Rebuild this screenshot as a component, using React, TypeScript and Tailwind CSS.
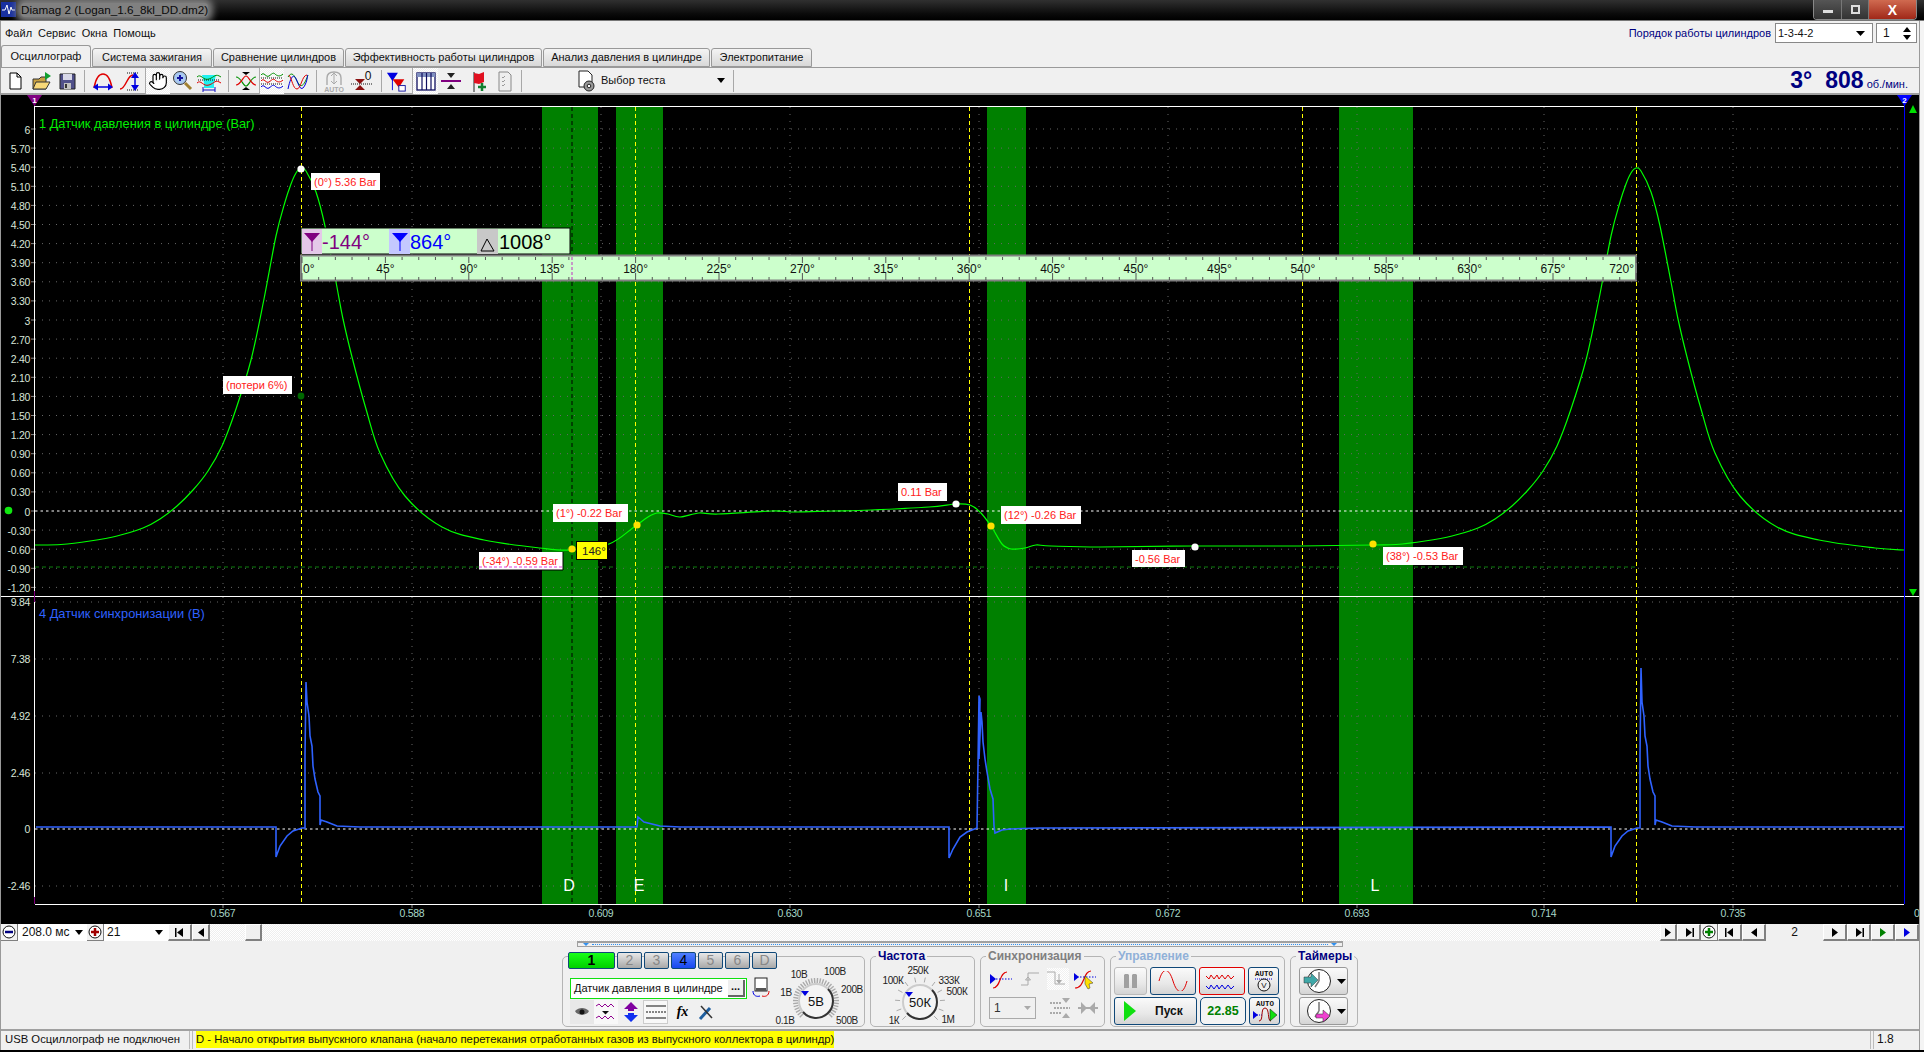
import React from "react";
import { Hand } from "lucide-react";

type P = [number, number];
const smooth = (pts: P[]) => {
  let d = `M${pts[0][0]} ${pts[0][1]}`;
  for (let i = 0; i < pts.length - 1; i++) {
    const p0 = pts[i - 1] || pts[i], p1 = pts[i], p2 = pts[i + 1], p3 = pts[i + 2] || p2;
    const c1x = p1[0] + (p2[0] - p0[0]) / 6, c1y = p1[1] + (p2[1] - p0[1]) / 6;
    const c2x = p2[0] - (p3[0] - p1[0]) / 6, c2y = p2[1] - (p3[1] - p1[1]) / 6;
    d += ` C${c1x.toFixed(1)} ${c1y.toFixed(1)} ${c2x.toFixed(1)} ${c2y.toFixed(1)} ${p2[0]} ${p2[1]}`;
  }
  return d;
};
const A: P[] = [[35,546],[61,545.5],[90,542],[117,537],[143,529],[160,520],[177,507],[193,491],[208,472],[222,447],[236,410],[251,361],[264,300],[276,237],[285,203],[291,185],[296,174],[301,169]];
const B: P[] = [[306,172],[316,193],[325,227],[336,283],[343,320],[352,358],[366,410],[380,454],[405,497],[442,528],[484,541],[540,549],[572,551]];
const MID: P[] = [[609,545],[634,528],[648,518],[657,514],[668,515],[680,518],[699,514],[718,515],[772,512],[795,513],[833,512],[871,511],[929,508],[956,505],[970,506],[980,513],[991,527],[1002,545],[1011,550],[1025,549],[1036,546],[1051,547],[1100,548],[1194,547],[1300,547],[1373,546]];
const shift = (l: P[]) => l.map(([x, y]) => [x + 1335, y] as P);
const GREEN = smooth([...A, ...B, ...MID, ...shift(A.slice(1)), ...shift(B.slice(0, -1)), [1904, 551]]);
const S1: P[] = [[276,828],[276,858],[280,847],[287,837],[293,832],[302,829],[305,829],[305,756],[306,683],[307,703],[309,717],[310,737],[312,747],[313,767],[315,780],[318,793],[320,797],[320,826],[321,821],[327,823],[337,827],[360,828]];
const S2: P[] = [[949,828],[949,859],[953,850],[960,838],[967,833],[977,829],[978,765],[979,697],[980,700],[979,760],[981,713],[982,723],[983,743],[985,760],[987,773],[990,790],[993,800],[994,827],[995,834],[1002,831],[1010,830],[1040,829]];
const S3: P[] = S1.map(([x, y]) => [x + 1335, y === 683 ? 669 : y] as P);
const BLUE: P[] = [[36,828],...S1,[630,828],[637,828],[638,818],[644,823],[660,827],[680,828],...S2,...S3,[1904,828]];

const YL = ["6","5.70","5.40","5.10","4.80","4.50","4.20","3.90","3.60","3.30","3","2.70","2.40","2.10","1.80","1.50","1.20","0.90","0.60","0.30","0","-0.30","-0.60","-0.90","-1.20"];
const YL2: [string, number][] = [["9.84",603],["7.38",660],["4.92",717],["2.46",774],["0",830],["-2.46",887]];
const TX: [string, number][] = [["0.567",223],["0.588",412],["0.609",601],["0.630",790],["0.651",979],["0.672",1168],["0.693",1357],["0.714",1544],["0.735",1733]];
const BANDS: [number, number, string, number][] = [[542,598,"D",569],[616,663,"E",639],[987,1026,"I",1006],[1339,1413,"L",1375]];
const LABELS: [number, number, number, number, string][] = [
  [311,174,69,17,"(0°) 5.36 Bar"],[223,377,69,18,"(потери 6%)"],[553,505,75,18,"(1°) -0.22 Bar"],[898,484,49,18,"0.11 Bar"],
  [1001,507,80,18,"(12°) -0.26 Bar"],[1132,551,53,17,"-0.56 Bar"],[1383,548,80,18,"(38°) -0.53 Bar"],[479,553,84,18,"(-34°) -0.59 Bar"],
];
const Chart = () => (
  <svg viewBox="1 96 1918 829" width={1918} height={829} className="block shrink-0" style={{ fontFamily: "'Liberation Sans',sans-serif" }}>
    <rect x="0" y="96" width="1920" height="829" fill="#000" />
    {BANDS.map(([a, b]) => <rect key={a} x={a} y="108" width={b - a} height="797" fill="#008000" />)}
    {YL.map((t, i) => { const y = 130 + i * 19.1; return (
      <g key={t}>
        {t !== "0" && <line x1="35" x2="1904" y1={y} y2={y} stroke="#666" strokeDasharray="1 6" />}
        <line x1="31" x2="35" y1={y} y2={y} stroke="#888" />
        <text x="30" y={y + 4.5} textAnchor="end" fontSize="10.5" letterSpacing="-0.3" fill="#d8e4d8">{t}</text>
      </g>); })}
    {YL2.map(([t, y]) => (
      <g key={t}>
        {t !== "0" && <line x1="35" x2="1904" y1={y} y2={y} stroke="#666" strokeDasharray="1 6" />}
        <text x="30" y={y + 4} textAnchor="end" fontSize="10.5" letterSpacing="-0.3" fill="#d8e4d8">{t}</text>
      </g>))}
    {TX.map(([t, x]) => (
      <g key={t}>
        <line x1={x} x2={x} y1="108" y2="905" stroke="#666" strokeDasharray="1 6" />
        <line x1={x} x2={x} y1="905" y2="909" stroke="#888" />
        <text x={x} y="918" textAnchor="middle" fontSize="10.5" letterSpacing="-0.3" fill="#a8d8c8">{t}</text>
      </g>))}
    <text x="1914" y="918" fontSize="10.5" fill="#a8d8c8">0.</text>
    <line x1="35" x2="1904" y1="512" y2="512" stroke="#fff" strokeDasharray="2.5 3" />
    <line x1="35" x2="1904" y1="830" y2="830" stroke="#fff" strokeDasharray="2.5 3" />
    <line x1="35" x2="1636" y1="568" y2="568" stroke="#0a7c0a" strokeDasharray="4 3" />
    {[301.5, 635.5, 969.5, 1302.5, 1636.5].map((x) => <line key={x} x1={x} x2={x} y1="108" y2="905" stroke="#ffff00" strokeDasharray="4 3" />)}
    <line x1="572" x2="572" y1="108" y2="905" stroke="#000" strokeDasharray="4 3" />
    <path d={GREEN} fill="none" stroke="#00ff00" strokeWidth="1.2" />
    <polyline points={BLUE.map((p) => p.join(",")).join(" ")} fill="none" stroke="#2f62ff" strokeWidth="1.6" />
    <line x1="0" x2="1920" y1="597.5" y2="597.5" stroke="#fff" />
    <line x1="35" x2="1904" y1="107.5" y2="107.5" stroke="#fff" />
    <line x1="35" x2="1904" y1="905.5" y2="905.5" stroke="#fff" />
    <line x1="34.5" x2="34.5" y1="107" y2="905" stroke="#fff" />
    <line x1="34.5" x2="34.5" y1="96" y2="107" stroke="#800080" />
    <line x1="34.5" x2="34.5" y1="592" y2="603" stroke="#800080" />
    <line x1="34.5" x2="34.5" y1="898" y2="905" stroke="#800080" />
    <line x1="1904.5" x2="1904.5" y1="96" y2="905" stroke="#0000ff" />
    <polygon points="27,96 42,96 34.5,107" fill="#800080" />
    <text x="34.5" y="104" textAnchor="middle" fontSize="8" fontWeight="700" fill="#fff">1</text>
    <polygon points="1897,96 1912,96 1904.5,107" fill="#0000ff" />
    <text x="1904.5" y="104" textAnchor="middle" fontSize="8" fontWeight="700" fill="#fff">2</text>
    <polygon points="1913,106 1909,114 1917,114" fill="#00e000" />
    <polygon points="1909,590 1917,590 1913,597" fill="#00e000" />
    <circle cx="8.5" cy="511.5" r="3.8" fill="#10e810" />
    <text x="39" y="129" fontSize="12.8" fill="#00f000">1 Датчик давления в цилиндре (Bar)</text>
    <text x="39" y="619" fontSize="12.8" fill="#2f62ff">4 Датчик синхронизации (В)</text>
    {BANDS.map(([a, , l, x]) => <text key={a} x={x} y="892" textAnchor="middle" fontSize="16" fill="#fff">{l}</text>)}

    <rect x="301" y="229" width="269" height="26" fill="#ccffcc" stroke="#000" />
    <rect x="302" y="230" width="20" height="25" fill="#e4c8e8" />
    <polygon points="304,234 320,234 312,243" fill="#800080" /><line x1="312" x2="312" y1="240" y2="252" stroke="#800080" />
    <text x="322" y="250" fontSize="20" fill="#800080">-144°</text>
    <rect x="389" y="230" width="21" height="25" fill="#c4c8ff" />
    <polygon points="392,234 408,234 400,243" fill="#0000ff" /><line x1="400" x2="400" y1="240" y2="252" stroke="#0000ff" />
    <text x="410" y="250" fontSize="20" fill="#0000ff">864°</text>
    <rect x="477" y="230" width="21" height="25" fill="#c8c8c8" />
    <polygon points="487,240 481,252 494,252" fill="none" stroke="#000" />
    <text x="499" y="250" fontSize="20" fill="#000">1008°</text>

    <rect x="301" y="256.5" width="1335" height="25" fill="#ccffcc" stroke="#808080" strokeWidth="2" />
    {Array.from({ length: 81 }, (_, i) => { const x = 302 + i * 16.68; const maj = i % 5 === 0; return (
      <g key={i}>
        <line x1={x} x2={x} y1="258" y2={maj ? 264 : 261} stroke="#555" />
        <line x1={x} x2={x} y1={maj ? 274 : 278} y2="281" stroke="#555" />
      </g>); })}
    {Array.from({ length: 17 }, (_, i) => (
      <text key={i} x={i === 0 ? 303 : i === 16 ? 1634 : 302 + i * 83.4} y="274" textAnchor={i === 0 ? "start" : i === 16 ? "end" : "middle"} fontSize="12" fill="#111">{i * 45}°</text>))}
    <line x1="572" x2="572" y1="258" y2="281" stroke="#c030c0" strokeDasharray="3 2" />

    {LABELS.map(([x, y, w, h, t]) => (
      <g key={t}>
        <rect x={x} y={y} width={w} height={h} fill="#fff" />
        <text x={x + 3} y={y + 13} fontSize="11" fill="#ff2020">{t}</text>
      </g>))}
    <path d="M563 553V571H479" fill="none" stroke="#000" />
    <line x1="479" x2="563" y1="568" y2="568" stroke="#e040e0" strokeDasharray="3 2" />
    <rect x="576.5" y="542.5" width="31" height="18" fill="#ffff00" stroke="#000" />
    <text x="582" y="556" fontSize="11.5" fill="#222">146°</text>
    {([[572,550],[637,526],[991,527],[1373,545]] as P[]).map(([x, y]) => <circle key={x} cx={x} cy={y} r="3.6" fill="#ffe000" />)}
    {([[301,170],[956,505],[1195,548]] as P[]).map(([x, y]) => <circle key={x} cx={x} cy={y} r="3.6" fill="#fff" />)}
    <circle cx="301" cy="397" r="3.4" fill="#006800" />
  </svg>
);

const I = ({ children, w = 24, h = 24, vb }: { children: React.ReactNode; w?: number; h?: number; vb?: string }) => (
  <svg width={w} height={h} viewBox={vb || `0 0 ${w} ${h}`} className="block" fill="none">{children}</svg>
);
const Tool = ({ children, pressed, w = 26 }: { children: React.ReactNode; pressed?: boolean; w?: number }) => (
  <div className={`h-[26px] shrink-0 flex items-center justify-center ${pressed ? "bg-[repeating-conic-gradient(#f0f0f0_0_25%,#ffffff_0_50%)] bg-[length:2px_2px] border-l border-[#aaa]" : ""}`} style={{ width: w }}>{children}</div>
);
const Sep = () => <div className="w-px h-[22px] bg-[#a8a8a8] mx-[4px] shrink-0" />;
const Toolbar = () => (
  <div className="h-[28px] shrink-0 flex items-center pl-[1px] border-t border-[#9a9a9a] border-b-2 border-b-[#a0a0a0]">
    <Tool><I><path d="M7 4h7l4 4v12H7z" fill="#fff" stroke="#000" /><path d="M14 4v4h4" stroke="#000" /></I></Tool>
    <Tool><I><path d="M4 10h6l2-2h5v12H4z" fill="#c8a040" stroke="#333" /><path d="M4 20l3-7h14l-4 7z" fill="#f8d878" stroke="#333" /><path d="M16 3l6 4-6 4z" fill="#10a030" /></I></Tool>
    <Tool><I><path d="M5 5h15v15H5z" fill="#50508a" stroke="#222" /><path d="M8 5h9v6H8z" fill="#d8d8e8" /><path d="M9 14h7v6H9z" fill="#c0c0c0" /><path d="M10 15h2v4h-2z" fill="#333" /></I></Tool>
    <Sep />
    <Tool w={27}><I><path d="M3 19C5 8 8 5 12 5s7 3 9 14" stroke="#e00000" strokeWidth="1.5" /><path d="M4 18h16" stroke="#0000e0" strokeWidth="1.5" /><path d="M2 18l5-3.500v7zM22 18l-5-3.500v7z" fill="#0000e0" /></I></Tool>
    <Tool w={27}><I><path d="M2 20c6 0 7-14 13-14" stroke="#e00000" strokeWidth="1.5" /><path d="M9 4h12M9 21h12" stroke="#111" strokeDasharray="1 1" /><path d="M17 7v12" stroke="#0000e0" strokeWidth="1.5" /><path d="M17 3l-4 6h8zM17 22l-4-6h8z" fill="#0000e0" /></I></Tool>
    <div className="w-[2px]" />
    <Tool pressed w={25}><Hand size={20} fill="#fff" stroke="#000" strokeWidth={1.4} /></Tool>
    <Tool w={24}><I><circle cx="10" cy="9" r="6.5" fill="#a8c8f0" stroke="#333" /><path d="M7 9h6M10 6v6" stroke="#1010a0" strokeWidth="2" /><path d="M15 14l6 6" stroke="#a08030" strokeWidth="3" /></I></Tool>
    <Tool w={30}><I w={28} vb="0 0 28 24"><path d="M7 6h14l-2 8v5H9v-5z" fill="#20f0f0" /><path d="M2 8c4-4 6 4 12 2s6-6 12-2" stroke="#009000" /><path d="M2 14c4-4 6 4 12 2s6-6 12-2" stroke="#e00000" /><path d="M3 11h22" stroke="#111" strokeDasharray="1 1" /><path d="M8 21h12M8 18v5M20 18v5" stroke="#1010c0" /></I></Tool>
    <Sep />
    <Tool w={26}><I><path d="M2 8c5 0 7 9 10 9s5-9 10-9" stroke="#009000" strokeWidth="1.2" /><path d="M2 16c5 0 7-9 10-9s5 9 10 9" stroke="#e00000" strokeWidth="1.2" /><path d="M8 3h8l-4 3zM8 21h8l-4-3z" fill="#000" /></I></Tool>
    <Tool pressed w={25}><I><path d="M1 6c3-4 5 3 8 1s4-4 6-2 5 3 8 0" stroke="#009000" /><path d="M1 12c3-4 5 3 8 1s4-4 6-2 5 3 8 0" stroke="#e00000" /><path d="M1 18c3-4 5 3 8 1s4-4 6-2 5 3 8 0" stroke="#0000e0" /><path d="M1 9h22M1 15h22" stroke="#111" strokeDasharray="1 1" /></I></Tool>
    <Tool w={28}><I><path d="M2 8c4-6 6-2 9 4s6 8 11-6" stroke="#009000" /><path d="M2 20c3-14 6-16 9-8s5 10 8 4 2-10 3-10" stroke="#0000e0" /><path d="M3 6c3 4 4 14 8 14s5-14 10-14" stroke="#e00000" /></I></Tool>
    <Sep />
    <Tool w={26}><I><path d="M5 16V9c0-4 3-6 7-6s7 2 7 6v7" stroke="#aaa" strokeWidth="1.4" /><path d="M12 5v9M9 7l3-3 3 3M9 12l3 3 3-3" stroke="#aaa" /><text x="12" y="23" textAnchor="middle" fontSize="7" fontWeight="700" fill="#aaa" fontFamily="Liberation Sans">AUTO</text></I></Tool>
    <Tool w={30}><I><path d="M5 10h10l-5 5zM5 21h10l-5-5z" fill="#8a1010" /><path d="M1 15h22" stroke="#111" strokeDasharray="1 1" /><text x="18" y="11" textAnchor="middle" fontSize="12" fill="#111" fontFamily="Liberation Sans">0</text></I></Tool>
    <Sep />
    <Tool w={22}><I><path d="M1 3h12l-6 9z" fill="#0000e0" /><path d="M7 10h13l-6 9z" fill="#e00000" /><path d="M7 10v12" stroke="#0000e0" /><rect x="14" y="17" width="7" height="6" fill="#fff" stroke="#1010a0" /></I></Tool>
    <div className="w-[4px]" />
    <Tool pressed w={26}><I><rect x="3" y="4" width="18" height="17" fill="#fff" stroke="#101060" strokeWidth="1.3" /><path d="M3 4h18v4H3z" fill="#8090c0" /><path d="M8 4v17M12.500 4v17M17 4v17" stroke="#101060" strokeWidth="1.2" /></I></Tool>
    <Tool w={25}><I><path d="M2 12h20" stroke="#800080" strokeWidth="2" /><path d="M8 4h8l-4 5zM8 20h8l-4-5z" fill="#222" /></I></Tool>
    <Tool w={30}><I><path d="M8 3v20" stroke="#222" /><path d="M8 4l5 1 5-2v10l-5 2-5-1z" fill="#e01020" /><path d="M16 14v8M12 18h8" stroke="#108030" strokeWidth="2.5" /></I></Tool>
    <Tool w={24}><I><path d="M6 3h9l3 3v16H6z" fill="#eee" stroke="#888" /><path d="M9 8l1 1 2-2M9 12l1 1 2-2M9 16l1 1 2-2" stroke="#999" /></I></Tool>
    <Sep />
    <div className="w-[48px]" />
    <div className="w-[25px] h-[26px] flex items-center"><I><path d="M5 2h9l4 4v12H5z" fill="#fff" stroke="#222" /><circle cx="15" cy="17" r="5" fill="#999" stroke="#222" /><circle cx="15" cy="17" r="1.800" fill="#fff" stroke="#222" /></I></div>
    <div className="w-[118px] pl-[2px] text-[11px] text-[#111]">Выбор теста</div>
    <svg width="8" height="5"><path d="M0 0h8L4 5z" fill="#000" /></svg>
    <div className="w-[4px]" /><Sep />
    <div className="ml-auto mr-[11px] flex items-baseline text-[#000080]">
      <span className="text-[23px] font-bold leading-none">3°</span>
      <span className="text-[23px] font-bold leading-none ml-[13px]">808</span>
      <span className="text-[11px] ml-[3px]">об./мин.</span>
    </div>
  </div>
);

const Tri = ({ c = "#000", w = 8, h = 5 }: { c?: string; w?: number; h?: number }) => <svg width={w} height={h} className="block shrink-0"><path d={`M0 0h${w}L${w / 2} ${h}z`} fill={c} /></svg>;
const Nav = ({ w = 24, t, c = "#000", bar }: { w?: number; t: "l" | "r"; c?: string; bar?: "l" | "r" }) => (
  <div className="h-[17px] shrink-0 flex items-center justify-center bg-[#f2f2f2] border-r-2 border-b-2 border-[#808080] border-t border-l border-t-white border-l-white" style={{ width: w }}>
    <svg width="12" height="9" viewBox="0 0 12 9">
      {t === "l" ? <path d="M9 0v9L3 4.500z" fill={c} /> : <path d="M3 0v9l6-4.500z" fill={c} />}
      {bar === "l" && <path d="M1 0h1.500v9H1z" fill={c} />}
      {bar === "r" && <path d="M9.500 0H11v9H9.500z" fill={c} />}
    </svg>
  </div>
);
const Zoom = ({ s, c }: { s: "+" | "-"; c: string }) => (
  <div className="w-[17px] h-[17px] shrink-0 flex items-center justify-center bg-[#f2f2f2] border-r border-b border-[#808080]">
    <svg width="14" height="14"><circle cx="7" cy="7" r="6" fill="#fff" stroke="#111" /><path d={s === "+" ? "M3 7h8M7 3v8" : "M3 7h8"} stroke={c} strokeWidth="2.500" /></svg>
  </div>
);
const ScrollRow = () => (
  <div className="h-[17px] shrink-0 flex items-stretch text-[12px] leading-[17px] text-[#111]">
    <Zoom s="-" c="#000080" />
    <div className="w-[69px] bg-white flex items-center justify-between pl-[4px] pr-[4px] shrink-0"><span className="whitespace-nowrap">208.0 мс</span><Tri /></div>
    <Zoom s="+" c="#a00000" />
    <div className="w-[64px] bg-white flex items-center justify-between pl-[3px] pr-[5px] shrink-0"><span>21</span><Tri /></div>
    <Nav t="l" bar="l" /><Nav w={18} t="l" />
    <div className="flex-1 bg-[repeating-conic-gradient(#eeeeee_0_25%,#ffffff_0_50%)] bg-[length:2px_2px] pl-[35px]">
      <div className="w-[17px] h-[17px] bg-[#f0f0f0] border-r-2 border-b-2 border-[#808080] border-t border-l border-t-white border-l-white" />
    </div>
    <Nav w={17} t="r" /><Nav t="r" bar="r" />
    <Zoom s="+" c="#008000" />
    <Nav t="l" bar="l" /><Nav t="l" />
    <div className="w-[57px] text-center">2</div>
    <Nav t="r" /><Nav t="r" bar="r" /><Nav t="r" c="#008000" /><Nav t="r" c="#0000e0" />
  </div>
);

const Group = ({ title, cls, w, children, color }: { title: string; cls: string; w: number; children: React.ReactNode; color: string }) => (
  <div className="relative h-[71px] border border-[#b4b4b4] rounded-[5px] shrink-0" style={{ width: w }}>
    <span className={`absolute -top-[9px] px-[2px] bg-[#f0f0f0] text-[12px] leading-[16px] font-bold whitespace-nowrap ${cls}`} style={{ color }}>{title}</span>
    {children}
  </div>
);
const Ch = ({ t, w = 25, kind }: { t: string; w?: number; kind?: "g" | "b" }) => (
  <div className={`h-[17px] shrink-0 rounded-[2px] border border-[#104878] text-center text-[14px] leading-[15px] ${kind === "g" ? "bg-[linear-gradient(#18ff18,#00d000)] text-black font-bold" : kind === "b" ? "bg-[linear-gradient(#5080ff,#1848f0)] text-black" : "bg-[linear-gradient(#e8e8e8,#a8a8a8)] text-[#888]"}`} style={{ width: w }}>{t}</div>
);
const Knob = ({ vb, cx, cy, v, labels, dense }: { vb: string; cx: number; cy: number; v: string; labels: [string, number, number][]; dense?: boolean }) => {
  const angs = Array.from({ length: dense ? 36 : 12 }, (_, i) => -225 + (i * 270) / (dense ? 35 : 11));
  return (
    <svg width={+vb.split(" ")[2]} height={+vb.split(" ")[3]} viewBox={vb} className="block shrink-0" style={{ fontFamily: "'Liberation Sans',sans-serif" }}>
      {angs.map((a) => { const r = (a * Math.PI) / 180; const r1 = dense ? 18 : 20; const r2 = dense ? 23 : 25; return <line key={a} x1={cx + r1 * Math.cos(r)} y1={cy + r1 * Math.sin(r)} x2={cx + r2 * Math.cos(r)} y2={cy + r2 * Math.sin(r)} stroke="#aaa" strokeWidth={dense ? 1.4 : 1} />; })}
      <circle cx={cx} cy={cy} r="17" fill="#f4f4f4" stroke="#ccc" strokeWidth="2" />
      <path d={`M${cx + 12} ${cy - 12}A17 17 0 1 1 ${cx - 13} ${cy + 11}`} stroke="#333" strokeWidth="2" fill="none" />
      <polygon points={`${cx - 15},${cy - 10} ${cx - 7},${cy - 10} ${cx - 11},${cy - 5}`} fill="#0000e0" />
      <text x={cx} y={cy + 5} textAnchor="middle" fontSize="13" fill="#111">{v}</text>
      {labels.map(([t, x, y]) => <text key={t} x={x} y={y} textAnchor="middle" fontSize="10" letterSpacing="-0.4" fill="#222">{t}</text>)}
    </svg>
  );
};
const Btn = ({ w, children, cls = "border-[#104878]" }: { w: number; children: React.ReactNode; cls?: string }) => (
  <div className={`h-[28px] shrink-0 rounded-[3px] border flex items-center justify-center bg-[linear-gradient(#fafafa,#e8e8e8_60%,#d4d4d4)] ${cls}`} style={{ width: w }}>{children}</div>
);
const Clock = ({ dir }: { dir: "in" | "out" }) => (
  <div className="flex items-center justify-center gap-[3px]">
    <svg width="32" height="26" viewBox="0 0 32 26" fill="none">
      <circle cx="17" cy="13" r="11.500" fill="#fff" stroke="#222" />
      <path d="M17 13V4M17 13l-4 6" stroke="#777" strokeWidth="1.500" />
      {dir === "in" ? <path d="M2 9h7V5l7 7-7 7v-4H2z" fill="#40a8a8" stroke="#333" strokeWidth=".5" /> : <path d="M14 16h7v-4l7 6-7 6v-4h-7z" fill="#f040d0" stroke="#333" strokeWidth=".5" />}
    </svg>
    <Tri w={9} h={5} />
  </div>
);
const Lower = () => (
  <div className="h-[88px] shrink-0 flex flex-col items-center">
    <div className="w-[766px] h-[6px] mt-0 border border-[#a0a0a0] border-t-2 flex items-center justify-between px-[5px]">
      <Tri c="#3090f0" w={6} h={3} />
      <div className="flex-1 border-t border-dotted border-[#3090f0] mx-[3px]" />
      <Tri c="#3090f0" w={6} h={3} />
    </div>
    <div className="w-[796px] mt-[9px] flex gap-[5px] items-start">
      <Group title="" cls="hidden" w={303} color="#000">
        <div className="flex">
          <div className="w-[209px] pl-[5px] shrink-0">
            <div className="flex gap-[2px] -mt-[5px]">
              <Ch t="1" w={47} kind="g" /><Ch t="2" /><Ch t="3" /><Ch t="4" kind="b" /><Ch t="5" /><Ch t="6" /><Ch t="D" />
            </div>
            <div className="flex items-center mt-[8px] ml-[2px]">
              <div className="w-[177px] h-[21px] border border-[#10e010] bg-white flex items-center pl-[3px] pr-[1px] justify-between">
                <span className="text-[11px] whitespace-nowrap text-[#111]">Датчик давления в цилиндре</span>
                <div className="w-[17px] h-[17px] bg-[#eee] border-r-2 border-b-2 border-[#666] text-[11px] font-bold leading-[12px] text-center">...</div>
              </div>
              <div className="ml-[4px]"><I w={20} h={22}><rect x="4" y="1" width="12" height="13" fill="#fff" stroke="#222" /><path d="M5 11h10v3H5z" fill="#555" /><path d="M2 14c0 5 4 6 7 5" stroke="#0000e0" /><path d="M18 14c0 5-4 6-7 5" stroke="#e00000" /></I></div>
            </div>
            <div className="flex items-center mt-[1px] ml-[2px]">
              <div className="w-[24px] h-[24px] bg-[#e8e8e8] flex items-center justify-center"><I w={16} h={12}><path d="M1 5c4-4 10-4 14 0-2 5-12 5-14 0z" fill="#666" /><circle cx="8" cy="6" r="2.500" fill="#111" /></I></div>
              <div className="w-[24px] h-[24px] bg-[#f8f8f8] flex items-center justify-center"><I w={20} h={20}><path d="M0 4l3-2 3 3 3-3 3 3 3-3 3 3M0 16l3-2 3 3 3-3 3 3 3-3 3 3" stroke="#900090" /><path d="M6 9h7l-3.500 3.500z" fill="#111" /></I></div>
              <div className="w-[25px] flex justify-center"><I w={18} h={22}><path d="M9 1l7 7h-4v2H6V8H2z" fill="#8000a0" /><path d="M9 21l7-7h-4v-2H6v2H2z" fill="#1030f0" /></I></div>
              <div className="w-[25px] h-[24px] bg-[#f8f8f8] border border-[#ccc] flex items-center justify-center"><I w={20} h={14}><path d="M0 1h20M0 13h20" stroke="#111" /><path d="M0 7h20" stroke="#111" strokeDasharray="2 1" /></I></div>
              <div className="w-[29px] text-center font-['Liberation_Serif',serif] italic font-bold text-[14px] leading-[20px] text-black">fx</div>
              <div className="w-[18px] flex justify-center"><I w={16} h={18}><path d="M2 16L12 5" stroke="#2060a0" strokeWidth="3" /><path d="M3 3l11 12" stroke="#333" strokeWidth="1.500" /></I></div>
            </div>
          </div>
          <Knob vb="770 958 92 69" cx={814} cy={1002} v="5В" dense labels={[["10В",797,979],["100В",833,976],["1В",784,997],["200В",850,994],["0.1В",783,1025],["500В",845,1025]]} />
        </div>
      </Group>
      <Group title="Частота" cls="left-[5px]" w={105} color="#000080">
        <Knob vb="869 958 103 69" cx={918} cy={1003} v="50К" labels={[["250К",916,975],["100К",891,985],["333К",947,985],["500К",955,996],["1К",892,1025],["1М",946,1024]]} />
      </Group>
      <Group title="Синхронизация" cls="left-[5px]" w={125} color="#808080">
        <div className="flex items-center gap-[8px] pl-[8px] pt-[11px]">
          <I h={20}><path d="M4 19c8 0 6-16 14-16" stroke="#e00000" strokeWidth="1.200" /><path d="M1 10h22" stroke="#0000e0" strokeDasharray="1.500 1.500" /><path d="M1 5l6 5-6 5z" fill="#0000e0" /></I>
          <I w={18} h={20}><path d="M0 16h7V4h11M7 8l-2.500 3h5z" stroke="#aaa" /></I>
          <div className="bg-[repeating-conic-gradient(#f0f0f0_0_25%,#ffffff_0_50%)] bg-[length:2px_2px]"><I w={22} h={22}><path d="M0 4h8v12h10M12 6v8" stroke="#aaa" /><path d="M9 12h6l-3 4z" fill="#aaa" /></I></div>
          <div className="-ml-[4px]"><I h={22}><path d="M2 20c10 0 8-17 16-17" stroke="#e00000" strokeWidth="1.200" /><path d="M1 9h22" stroke="#0000e0" strokeDasharray="1.500 1.500" /><path d="M1 5l5 4-5 4z" fill="#0000e0" /><path d="M12 8l8 7-4 1 1 4-2 1-3-5z" fill="#ffe000" stroke="#333" strokeWidth=".5" /></I></div>
        </div>
        <div className="flex items-center mt-[7px] pl-[8px]">
          <div className="w-[47px] h-[22px] border border-[#aaa] flex items-center justify-between px-[4px] text-[12px] text-[#333]"><span>1</span><Tri c="#aaa" w={7} h={4} /></div>
          <div className="ml-[14px]"><I w={20} h={20}><path d="M0 5h12M0 15h12M4 10h16" stroke="#aaa" strokeWidth="2" strokeDasharray="2 1" /><path d="M12 0h8l-4 5zM12 20h8l-4-5z" fill="#aaa" /></I></div>
          <div className="ml-[8px]"><I w={20} h={14}><path d="M0 7h20" stroke="#aaa" strokeWidth="2" /><path d="M3 1l6 6-6 6zM17 1l-6 6 6 6z" fill="#aaa" /></I></div>
        </div>
      </Group>
      <Group title="Управление" cls="left-[5px]" w={175} color="#90b0d8">
        <div className="flex flex-col gap-[2px] pl-[3px] pt-[10px]">
          <div className="flex gap-[3px]">
            <Btn w={33} cls="border-[#bbb]"><svg width="13" height="16"><path d="M0 2l1-1h3l1 1v13H0zM8 2l1-1h3l1 1v13H8z" fill="#a0a0a0" /></svg></Btn>
            <Btn w={46}><svg width="30" height="20"><path d="M1 10C5-5 11-3 15 10s10 15 14 0" stroke="#e00000" fill="none" /></svg></Btn>
            <Btn w={46} cls="border-[#e00000]"><svg width="34" height="20"><path d="M1 5l3 3 2-4 3 4 3-4 2 4 3-4 3 4 3-4 3 4 3-3" stroke="#e00000" fill="none" /><path d="M1 15l3 3 2-4 3 4 3-4 2 4 3-4 3 4 3-4 3 4 3-3" stroke="#0000e0" fill="none" /></svg></Btn>
            <Btn w={31}><svg width="22" height="24"><text x="11" y="7" textAnchor="middle" fontSize="7.500" fontWeight="700" fill="#111" fontFamily="Liberation Mono">AUTO</text><path d="M2 10h18" stroke="#0000e0" strokeDasharray="1 1" /><circle cx="11" cy="16" r="6" fill="#eee" stroke="#111" /><text x="11" y="19" textAnchor="middle" fontSize="8" fill="#111" fontFamily="Liberation Sans">V</text></svg></Btn>
          </div>
          <div className="flex gap-[3px]">
            <div className="w-[83px] h-[28px] shrink-0 rounded-[3px] border border-[#104878] flex items-center pl-[9px] bg-[linear-gradient(#fafafa,#e8e8e8_60%,#d4d4d4)]">
              <svg width="12" height="20" className="shrink-0"><path d="M0 0l12 10L0 20z" fill="#10e010" /></svg>
              <span className="ml-[19px] text-[12px] font-bold text-[#111]">Пуск</span>
            </div>
            <div className="w-[46px] h-[28px] shrink-0 rounded-[5px] border border-[#104878] flex items-center justify-center bg-[#f4f4f4] text-[12.500px] font-bold text-[#008000]">22.85</div>
            <Btn w={31}><svg width="26" height="24" fill="none"><text x="13" y="7" textAnchor="middle" fontSize="7.500" fontWeight="700" fill="#111" fontFamily="Liberation Mono">AUTO</text><path d="M1 16h9" stroke="#0000e0" strokeDasharray="1 1" /><path d="M1 12l5 4-5 4z" fill="#0000e0" /><path d="M7 22c5 0 1-13 6-13s2 13 6 13" stroke="#a00000" /><path d="M18 10l7 6-7 6z" fill="#10e010" stroke="#111" strokeWidth=".5" /></svg></Btn>
          </div>
        </div>
      </Group>
      <Group title="Таймеры" cls="left-[5px]" w={68} color="#000080">
        <div className="flex flex-col gap-[2px] pl-[8px] pt-[10px]">
          <Btn w={49} cls="border-[#999]"><Clock dir="in" /></Btn>
          <Btn w={49} cls="border-[#999]"><Clock dir="out" /></Btn>
        </div>
      </Group>
    </div>
  </div>
);
const Status = () => (
  <div className="h-[20px] shrink-0 border-t-2 border-[#a0a0a0] flex text-[11.300px] leading-[17px] text-[#111]">
    <div className="w-[189px] pl-[4px] border-r border-[#bbb] whitespace-nowrap">USB Осциллограф не подключен</div>
    <div className="flex-1 ml-[2px] border-l border-r border-[#bbb] pl-[3px] whitespace-nowrap"><span className="bg-[#ffff00] inline-block">D - Начало открытия выпускного клапана (начало перетекания отработанных газов из выпускного коллектора в цилиндр)</span></div>
    <div className="w-[46px] ml-[2px] pl-[3px] border-l border-[#bbb] text-[12px]">1.8</div>
  </div>
);
const TABS: [string, number][] = [["Система зажигания",120],["Сравнение цилиндров",131],["Эффективность работы цилиндров",197],["Анализ давления в цилиндре",167],["Электропитание",101]];

export default function App() {
  return (
    <div className="w-[1924px] h-[1052px] flex flex-col overflow-hidden bg-[#f4f4f4] font-['Liberation_Sans',sans-serif] text-[#111]">
      <div className="h-[21px] shrink-0 flex items-start bg-[linear-gradient(#303030,#0a0a0a_70%,#000)] border-b border-[#777]">
        <div className="w-[15px] h-[15px] mt-[2px] ml-[1px] bg-[#1830a0] flex items-center justify-center shrink-0">
          <svg width="13" height="13"><path d="M0 7h3l2-5 2 9 2-7 1 3h3" stroke="#fff" fill="none" /></svg>
        </div>
        <div className="ml-[5px] mt-[3px] h-[14px] text-[11.700px] leading-[14px] text-[#0a0a0a] bg-[#808080] shadow-[0_0_7px_5px_#808080] rounded-[4px] whitespace-nowrap">Diamag 2 (Logan_1.6_8kl_DD.dm2)</div>
        <div className="ml-auto mr-[7px] flex h-[20px] rounded-b-[4px] overflow-hidden border border-t-0 border-[#888]">
          <div className="w-[28px] bg-[linear-gradient(#555,#333)] flex items-center justify-center border-r border-[#777]"><div className="w-[10px] h-[3px] bg-[#ddd] mt-[3px]" /></div>
          <div className="w-[27px] bg-[linear-gradient(#555,#333)] flex items-center justify-center border-r border-[#777]"><div className="w-[9px] h-[9px] border-2 border-[#ddd]" /></div>
          <div className="w-[47px] bg-[linear-gradient(#d06a50,#a02818)] flex items-center justify-center text-white text-[14px] font-bold leading-none">X</div>
        </div>
      </div>
      <div className="w-[1920px] flex flex-col h-[1029px] shrink-0 bg-[#f0f0f0] border-l border-r border-[#9a9a9a]">
        <div className="h-[24px] shrink-0 flex items-center pl-[4px] text-[11px] gap-[6px]">
          <span>Файл</span><span>Сервис</span><span>Окна</span><span>Помощь</span>
          <div className="ml-auto flex items-center mr-[2px]">
            <span className="text-[#000080] mr-[4px]">Порядок работы цилиндров</span>
            <div className="w-[98px] h-[20px] border border-[#888] bg-white flex items-center justify-between pl-[2px] pr-[7px]"><span>1-3-4-2</span><Tri w={9} /></div>
            <div className="w-[41px] h-[20px] ml-[3px] border border-[#888] bg-white flex items-center justify-between pl-[6px] pr-[5px] text-[12px]"><span>1</span><div className="flex flex-col gap-[3px]"><svg width="8" height="5" className="block"><path d="M0 5h8L4 0z" fill="#000" /></svg><Tri /></div></div>
          </div>
        </div>
        <div className="h-[22px] shrink-0 flex items-end gap-[1px] text-[11px] leading-none">
          <div className="w-[90px] h-[22px] bg-[#f0f0f0] border border-b-0 border-[#999] rounded-t-[3px] flex items-center justify-center">Осциллограф</div>
          {TABS.map(([t, w]) => <div key={t} className="h-[19px] bg-[linear-gradient(#f4f4f4,#d8d8d8)] border border-[#999] rounded-t-[3px] flex items-center justify-center whitespace-nowrap" style={{ width: w }}>{t}</div>)}
        </div>
        <Toolbar />
        <Chart />
        <ScrollRow />
        <Lower />
        <Status />
      </div>
      <div className="h-[2px] shrink-0 bg-black" />
    </div>
  );
}
